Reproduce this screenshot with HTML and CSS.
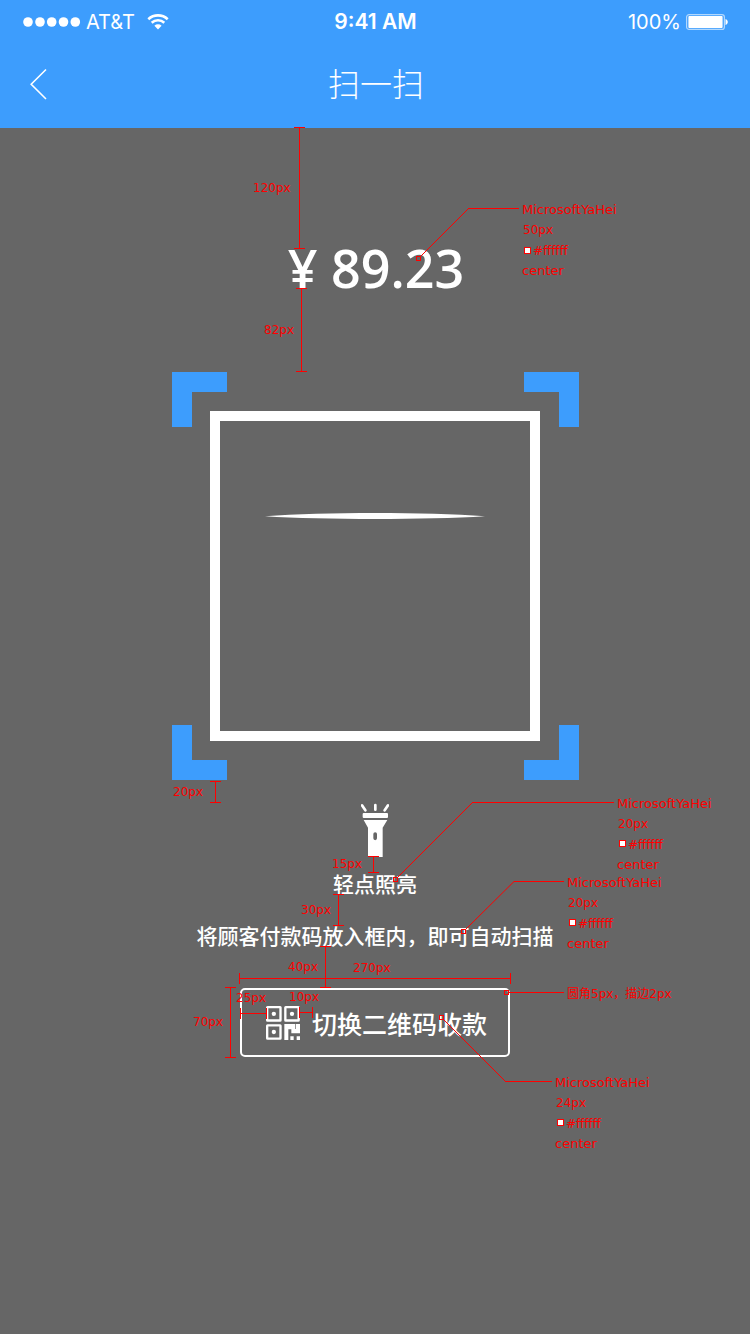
FILE: index.html
```html
<!DOCTYPE html>
<html lang="zh-CN">
<head>
<meta charset="utf-8">
<meta name="viewport" content="width=device-width, initial-scale=1">
<title>扫一扫</title>
<link rel="stylesheet" href="styles.css">
</head>
<body>
<div class="page">
  <header class="header">
    <div class="status">
      <div class="status-side">
        <svg class="dots" width="58" height="10" viewBox="0 0 58 10" aria-hidden="true">
          <circle cx="5" cy="5" r="4.8"/><circle cx="17" cy="5" r="4.8"/><circle cx="28.7" cy="5" r="4.8"/><circle cx="40.5" cy="5" r="4.8"/><circle cx="52.3" cy="5" r="4.8"/>
        </svg>
        <span>AT&amp;T</span>
        <svg class="wifi" width="22" height="16" viewBox="0 0 22 16" aria-hidden="true">
          <path d="M1.3 5.2a14.2 14.2 0 0 1 19.4 0M4.7 8.7a9.2 9.2 0 0 1 12.6 0"/>
          <path class="solid" d="M11 15.4 7.4 11.7a5.2 5.2 0 0 1 7.2 0z"/>
        </svg>
      </div>
      <span class="time">9:41 AM</span>
      <div class="status-side status-end">
        <span>100%</span>
        <svg class="battery" width="42" height="16" viewBox="0 0 42 16" aria-hidden="true">
          <rect class="shell" x=".6" y=".6" width="37.8" height="14.8" rx="2.5"/>
          <rect x="2.4" y="2" width="34.2" height="12" rx="1"/>
          <path d="M39.5 5c3 1 3 5 0 6z"/>
        </svg>
      </div>
    </div>
    <div class="nav">
      <button class="back" type="button" aria-label="返回">
        <svg width="18" height="32" viewBox="0 0 18 32" aria-hidden="true"><path d="M16 1.5 1.2 16.3 16 31"/></svg>
      </button>
      <h1 class="title">扫一扫</h1>
    </div>
  </header>

  <main class="main">
    <p class="amount">¥ 89.23</p>
    <div class="scanner">
      <span class="corner top-left"></span>
      <span class="corner top-right"></span>
      <span class="corner bottom-left"></span>
      <span class="corner bottom-right"></span>
      <div class="viewfinder">
        <svg width="220" height="6" viewBox="0 0 220 6" aria-hidden="true"><path d="M0 3.3C30 1 70 0 110 0S190 1 220 3.3C190 5.2 150 6 110 6S30 5.2 0 3.3z"/></svg>
      </div>
    </div>
    <button class="torch" type="button">
      <svg width="28" height="54" viewBox="213 39 84 162" aria-hidden="true">
        <path class="ray" d="m216 46 10 15M256 45v14M294 46l-10 15"/>
        <rect x="218" y="69" width="76" height="15" rx="3"/>
        <path fill-rule="evenodd" d="M221 90h71l-14 23v88h-44v-88zM250 132v13a5.5 5.5 0 0 0 11 0v-13a5.5 5.5 0 0 0-11 0z"/>
      </svg>
      <span>轻点照亮</span>
    </button>
    <p class="hint">将顾客付款码放入框内<span class="comma">，</span>即可自动扫描</p>
    <button class="switch" type="button">
      <svg width="34" height="34" viewBox="0 0 102 102" aria-hidden="true">
        <g class="ring">
          <rect x="3.5" y="3.5" width="40" height="40" rx="1"/>
          <rect x="58" y="3.5" width="40" height="40" rx="1"/>
          <rect x="3.5" y="58" width="40" height="40" rx="1"/>
        </g>
        <circle cx="23.5" cy="23.5" r="6.5"/><circle cx="78" cy="23.5" r="6.5"/><circle cx="23.5" cy="78" r="6.5"/>
        <path d="M55 54h33v15h2V54h12v28H76V70h-9v32H55zM73 91h10v11H73zM92 91h10v11H92z"/>
      </svg>
      <span>切换二维码收款</span>
    </button>
  </main>

  <svg class="notes" width="750" height="1160" viewBox="0 0 750 1160">
    <g class="rules">
      <path d="M299.5 127v122M294 127.5h11M294 248.5h11"/>
      <path d="M301.5 288v84M296 288.5h11M296 371.5h11"/>
      <path d="M215.5 781v22M210 781.5h11M210 802.5h11"/>
      <path d="M373.5 856v17M368 856.5h11M368 872.5h11"/>
      <path d="M338.5 894v32M333 894.5h11M333 925.5h11"/>
      <path d="M325.5 946v42M320 946.5h11M320 987.5h11"/>
      <path d="M239 978.5h272M239.5 973v11M510.5 973v11"/>
      <path d="M230.5 987v71M225 987.5h11M225 1057.5h11"/>
      <path d="M240 1013.5h27M240.5 1008v11M266.5 1008v11"/>
      <path d="M299 1012.5h14M299.5 1007v11M312.5 1007v11"/>
      <path d="M468 208.5h51M472 802.5h142M514 881.5h50M509 992.5h55M505 1081.5h47"/>
      <path d="M416.5 256.5h4v4h-4zM393.5 877.5h4v4h-4zM461.5 929.5h4v4h-4zM504.5 990.5h4v4h-4zM439.5 1015.5h4v4h-4z"/>
    </g>
    <path class="leaders" d="M421 256l47.5-47.5M398 877l74.5-74.5M466 929l48-47.5M444 1020l61.5 61.5"/>
    <g class="swatches">
      <rect x="524.5" y="247.5" width="6" height="6"/>
      <rect x="619.5" y="840.5" width="6" height="6"/>
      <rect x="569.5" y="919.5" width="6" height="6"/>
      <rect x="557.5" y="1119.5" width="6" height="6"/>
    </g>
    <g class="labels">
      <text x="253" y="192">120px</text>
      <text x="264" y="334">82px</text>
      <text x="173" y="796">20px</text>
      <text x="332" y="868">15px</text>
      <text x="301" y="914">30px</text>
      <text x="288" y="971">40px</text>
      <text x="353" y="972">270px</text>
      <text x="193" y="1026">70px</text>
      <text x="236" y="1002">25px</text>
      <text x="289" y="1001">10px</text>
      <text class="word" x="522" y="214">MicrosoftYaHei</text>
      <text x="523" y="234">50px</text>
      <text x="533" y="255">#ffffff</text>
      <text class="word" x="522" y="275">center</text>
      <text class="word" x="617" y="808">MicrosoftYaHei</text>
      <text x="618" y="828">20px</text>
      <text x="628" y="849">#ffffff</text>
      <text class="word" x="617" y="869">center</text>
      <text class="word" x="567" y="887">MicrosoftYaHei</text>
      <text x="568" y="907">20px</text>
      <text x="578" y="928">#ffffff</text>
      <text class="word" x="567" y="948">center</text>
      <text x="567" y="998">圆角5px，描边2px</text>
      <text class="word" x="555" y="1087">MicrosoftYaHei</text>
      <text x="556" y="1107">24px</text>
      <text x="566" y="1128">#ffffff</text>
      <text class="word" x="555" y="1148">center</text>
    </g>
  </svg>
</div>
</body>
</html>
```
FILE: styles.css
```css
* {
  box-sizing: border-box;
}

body {
  margin: 0;
  background: #666;
  color: #fff;
  font-family: "Noto Sans CJK SC", sans-serif;
}

svg {
  display: block;
  flex: none;
  fill: #fff;
}

button {
  padding: 0;
  border: 0;
  background: none;
  color: inherit;
  font: inherit;
  cursor: pointer;
}

.page {
  position: relative;
  min-height: 100vh;
  overflow: hidden;
}

.header {
  background: #3d9dfd;
}

.status {
  display: grid;
  grid-template-columns: 1fr auto 1fr;
  align-items: center;
  height: 40px;
  padding: 4px 22px 0 23px;
  font: 400 20px/24px Inter, sans-serif;
}

.status-side {
  display: flex;
  align-items: center;
  gap: 5px;
}

.status-end {
  justify-content: flex-end;
}

.time {
  font-size: 21px;
  font-weight: 600;
}

.wifi {
  margin-left: 7px;
  fill: none;
  stroke: #fff;
  stroke-width: 2.6;
}

.wifi .solid {
  fill: #fff;
  stroke: none;
}

.battery .shell {
  fill: none;
  stroke: #fff;
  stroke-opacity: 0.6;
  stroke-width: 1.2;
}

.nav {
  display: grid;
  grid-template-columns: 1fr auto 1fr;
  align-items: center;
  height: 88px;
  padding: 0 30px;
}

.back {
  justify-self: start;
}

.back svg {
  fill: none;
  stroke: #fff;
  stroke-width: 1.6;
}

.title {
  margin: 0 0 5px;
  padding-left: 2px;
  font-size: 32px;
  font-weight: 300;
  line-height: 48px;
}

.main {
  display: flex;
  flex-direction: column;
  align-items: center;
  padding: 110px 20px 40px;
}

.amount {
  margin: 0 0 74px;
  padding-left: 2px;
  font: 600 52px/60px "Open Sans", sans-serif;
}

.scanner {
  display: grid;
  width: 407px;
  height: 408px;
}

.scanner > * {
  grid-area: 1 / 1;
}

.corner {
  width: 55px;
  height: 55px;
  border: 0 solid #3d9dfd;
}

.top-left {
  place-self: start;
  border-width: 20px 0 0 20px;
}

.top-right {
  place-self: start end;
  border-width: 20px 20px 0 0;
}

.bottom-left {
  place-self: end start;
  border-width: 0 0 20px 20px;
}

.bottom-right {
  place-self: end;
  border-width: 0 20px 20px 0;
}

.viewfinder {
  display: flex;
  justify-content: center;
  place-self: center;
  width: 330px;
  height: 330px;
  padding-top: 92px;
  border: 10px solid #fff;
}

.torch {
  display: flex;
  flex-direction: column;
  align-items: center;
  gap: 11px;
  margin-top: 23px;
  font-size: 21px;
  font-weight: 500;
  line-height: 30px;
}

.torch .ray {
  fill: none;
  stroke: #fff;
  stroke-width: 8;
  stroke-linecap: round;
}

.hint {
  margin: 22px 0 0;
  font-size: 21px;
  font-weight: 500;
  line-height: 30px;
}

.comma {
  font-family: "Noto Sans CJK TC", sans-serif;
}

.switch {
  display: flex;
  align-items: center;
  gap: 12px;
  width: 270px;
  height: 69px;
  margin-top: 38px;
  padding-left: 24px;
  border: 2px solid #fff;
  border-radius: 5px;
  font-size: 25px;
  font-weight: 500;
  line-height: 36px;
  white-space: nowrap;
}

.ring {
  fill: none;
  stroke: #fff;
  stroke-width: 7;
}

.notes {
  position: absolute;
  top: 0;
  left: 50%;
  transform: translateX(-50%);
  pointer-events: none;
}

.rules,
.leaders {
  fill: none;
  stroke: #f00;
}

.rules {
  shape-rendering: crispEdges;
}

.swatches {
  fill: #fff;
  stroke: #f00;
}

.labels {
  fill: #f00;
  font: 12px "DejaVu Sans", "Noto Sans CJK SC", sans-serif;
}

.labels .word {
  font-size: 13px;
}
```
